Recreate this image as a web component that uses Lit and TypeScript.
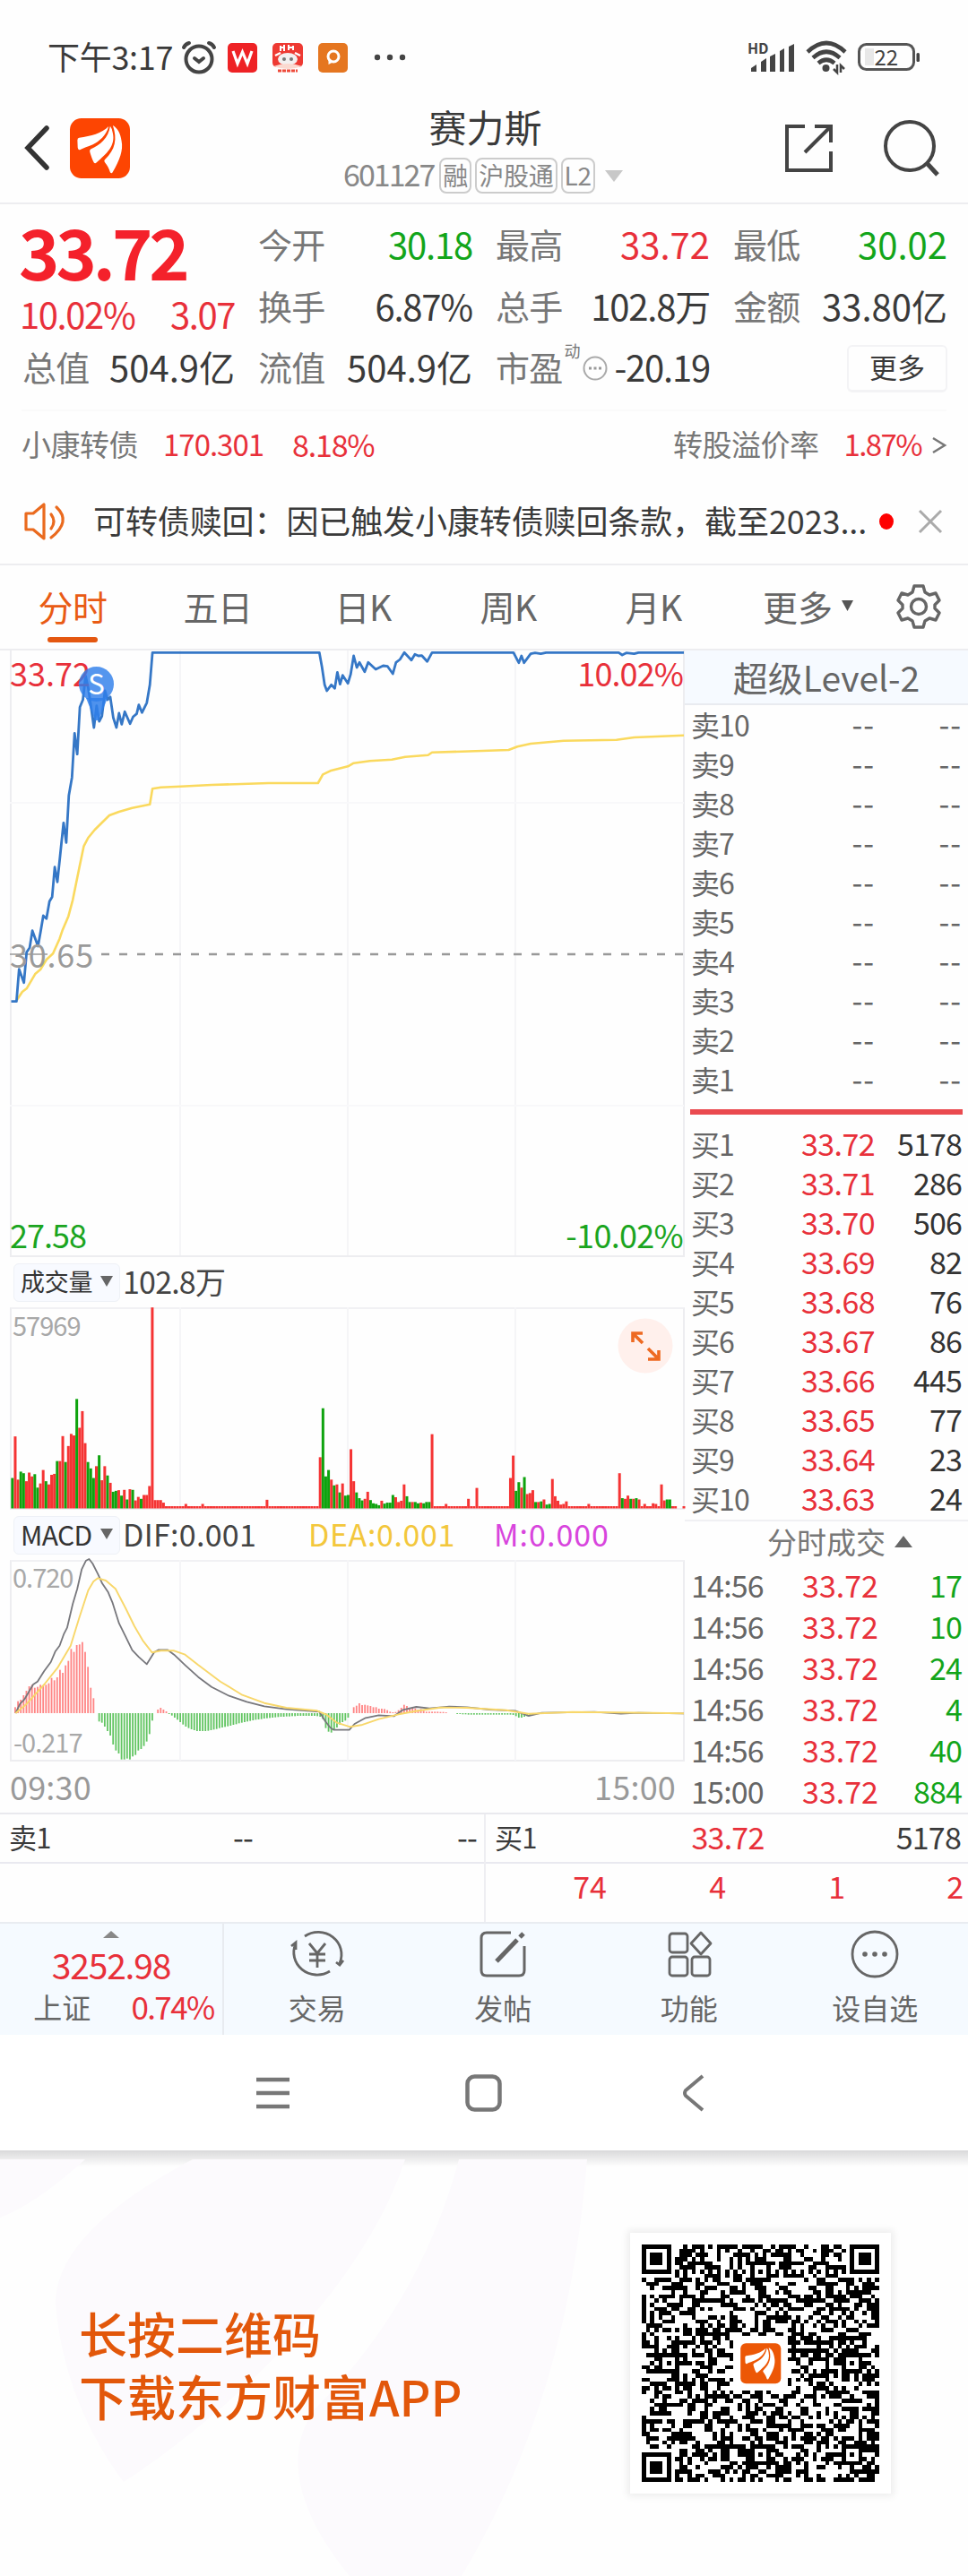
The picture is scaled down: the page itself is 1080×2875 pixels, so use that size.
import { LitElement, html, css, svg } from 'lit';
import { customElement } from 'lit/decorators.js';
import { classMap } from 'lit/directives/class-map.js';

type Point = [number, number];

// 图表坐标域（横轴 22~1553 对应 752px）
const CHART_W = 752;
const X0 = 22;
const X_SCALE = CHART_W / 1531;
const MINUTE = (i: number) => (28 + i * 6.355 - X0) * X_SCALE;

const PRICE_LINE: Point[] = [
  [25, 1490], [37, 1490], [43, 1382], [54, 1427], [60, 1325], [67, 1310], [73, 1253], [86, 1305], [92, 1255],
  [98, 1203], [105, 1213], [112, 1155], [118, 1140], [124, 1040], [130, 1090], [137, 990], [144, 892], [150, 958],
  [156, 800], [163, 740], [169, 592], [175, 662], [181, 505], [188, 480], [194, 400], [200, 440], [206, 500],
  [213, 573], [219, 500], [225, 552], [231, 535], [238, 450], [244, 480], [250, 470], [257, 540], [264, 573],
  [270, 525], [276, 562], [283, 520], [295, 560], [302, 537], [310, 527], [315, 497], [322, 523], [333, 490],
  [340, 430], [346, 322], [725, 322], [731, 370], [737, 430], [742, 450], [752, 430], [760, 442], [766, 388],
  [772, 428], [778, 398], [790, 425], [796, 395], [803, 333], [810, 372], [816, 355], [828, 386], [836, 355],
  [853, 378], [870, 366], [880, 368], [892, 393], [899, 355], [908, 345], [918, 322], [934, 347], [942, 328],
  [950, 333], [958, 332], [970, 352], [981, 322], [1166, 322], [1178, 356], [1184, 333], [1190, 356],
  [1205, 326], [1215, 323], [1228, 326], [1240, 322], [1405, 322], [1413, 330], [1422, 323], [1440, 326],
  [1450, 322], [1553, 322],
];

const AVG_LINE: Point[] = [
  [38, 1485], [50, 1458], [60, 1447], [80, 1397], [92, 1382], [105, 1350], [120, 1330], [135, 1280], [142, 1250],
  [155, 1205], [165, 1150], [180, 1040], [190, 970], [200, 942], [215, 915], [248, 867], [270, 855], [300, 842],
  [340, 830], [346, 778], [365, 773], [410, 770], [480, 765], [610, 759], [722, 759], [733, 730], [750, 718],
  [790, 703], [803, 692], [840, 685], [890, 680], [920, 671], [972, 665], [981, 656], [1080, 652], [1155, 648],
  [1175, 637], [1205, 627], [1280, 617], [1400, 614], [1440, 606], [1553, 599],
];

const DIF_LINE: Point[] = [
  [35, 696], [45, 665], [55, 650], [75, 600], [85, 590], [100, 555], [115, 525], [125, 490], [135, 470],
  [145, 430], [152, 410], [165, 330], [175, 280], [185, 215], [195, 185], [202, 180], [210, 195], [222, 230],
  [232, 262], [245, 290], [255, 325], [270, 395], [285, 440], [300, 485], [315, 508], [333, 532], [350, 492],
  [360, 484], [380, 484], [395, 500], [420, 535], [450, 575], [480, 608], [520, 638], [560, 658], [600, 673],
  [650, 683], [725, 691], [738, 722], [750, 745], [758, 752], [793, 752], [805, 732], [830, 712], [860, 703],
  [895, 706], [915, 685], [945, 675], [975, 680], [1020, 674], [1060, 676], [1110, 684], [1170, 688],
  [1200, 705], [1230, 695], [1350, 692], [1410, 698], [1450, 695], [1553, 697],
];

const DEA_LINE: Point[] = [
  [35, 696], [60, 665], [100, 600], [130, 545], [160, 470], [180, 375], [200, 285], [212, 255], [222, 244],
  [240, 252], [262, 280], [285, 345], [305, 405], [325, 455], [345, 493], [365, 487], [395, 487], [420, 500],
  [450, 535], [500, 590], [550, 635], [600, 662], [650, 678], [720, 688], [740, 700], [765, 728], [795, 742],
  [820, 736], [860, 716], [905, 700], [950, 688], [1000, 677], [1060, 678], [1150, 686], [1200, 698],
  [1300, 692], [1400, 694], [1553, 697],
];

// 成交量：[起始分钟, 颜色+高度]，其余分钟为 r7
const VOLUME: [number, string][] = [
  [0, 'g95 r225 r90 g115 g110 r85 r112 r100 g107 g65 r78 r120 g85 r75 r105 r108 g148 r148 r226 g145 r195 r233 r228 g342 r252 r304 r204 g145 g125 g95 r132 g166 r88 r132 g103 r80 g52 g55 r57 g40 r58 g28 r60 g58 r25 r36 g30 r42 r42 r70 r628 r26 r26 r26 r18'],
  [62, 'r14'],
  [68, 'r14'],
  [91, 'r27'],
  [110, 'r160 g313 g100 g120 r90 g72 r75 g50 r78 g40 g42 r185 r85 g50 g32 g25 r30 r52 g26 g16 g14 g10 r24 g15 g18 g18 g42 r35 r20 r24 r75 g38 g20 r20 g20 g16 r18 g16 g20 g20 r232'],
  [155, 'r14'],
  [163, 'r30'],
  [166, 'r64'],
  [178, 'r95 r165 g55 g82 r65 g98 r45 r48 r57 g20 r20 g22 r28 g12 g14 r92 r38 r24 r12 r14 r22'],
  [206, 'r14'],
  [217, 'r110 g32 r30 r40 g30 r30 g32 r28 r7 r14 r7 r7 r16 r14 r7 r75 r25 g28 g28 r7 r7 r0 r0'],
];

const MACD_BARS = [
  0, 20, 40, 45, 60, 75, 90, 95, 85, 88, 95, 90, 95, 100, 118, 110, 120, 145, 135, 160, 175, 215, 205, 228, 230,
  238, 205, 155, 85, 50, 0, -28, -32, -45, -60, -75, -105, -125, -135, -155, -155, -152, -155, -145, -140, -125,
  -120, -110, -95, -70, -25, 0, 12, 18, 12, 6, -3, -8, -15, -22, -30, -38, -45, -50, -54, -57, -60, -60, -60, -60,
  -59, -57, -55, -53, -50, -48, -46, -44, -42, -39, -37, -34, -32, -30, -28, -26, -24, -22, -21, -20, -18, -17,
  -16, -15, -14, -13, -12, -12, -11, -11, -10, -10, -9, -9, -9, -9, -9, -9, -9, -10, -12, -20, -50, -62, -65, -55,
  -48, -38, -30, -25, -15, 0, 20, 25, 33, 27, 28, 26, 24, 20, 20, 15, 15, 14, 10, 5, 3, 4, 10, 18, 28, 24, 18, 18,
  16, 12, 14, 8, 5, 5, 5, 5, 5, 4, 4, 3, 0, 0, 0, -3, -3, -4, -4, -5, -5, -5, -5, -5, -5, -5, -5, -5, -5, -5, -5,
  -5, -5, -5, -5, -6, -10, -15, -15, -12, -10, -6, -3,
];

const SELLS = [10, 9, 8, 7, 6, 5, 4, 3, 2, 1];
const BUYS: [number, string, string][] = [
  [1, '33.72', '5178'],
  [2, '33.71', '286'],
  [3, '33.70', '506'],
  [4, '33.69', '82'],
  [5, '33.68', '76'],
  [6, '33.67', '86'],
  [7, '33.66', '445'],
  [8, '33.65', '77'],
  [9, '33.64', '23'],
  [10, '33.63', '24'],
];
const TICKS: [string, string, string][] = [
  ['14:56', '33.72', '17'],
  ['14:56', '33.72', '10'],
  ['14:56', '33.72', '24'],
  ['14:56', '33.72', '4'],
  ['14:56', '33.72', '40'],
  ['15:00', '33.72', '884'],
];

const toPoints = (pts: Point[], top: number, unit: number) =>
  pts.map(([x, y]) => `${((x - X0) * X_SCALE).toFixed(1)},${((y - top) / unit).toFixed(1)}`).join(' ');

// 东方财富 logo 的三片羽毛，画布 200x200
const feathers = svg`
  <path d="M31 65 C70 60 106 50 129 27 C121 58 98 77 75 88 C60 95 46 98 33 105 Q27 107 26 98 L25 73 Q25 66 31 65Z"/>
  <path d="M134 26 C128 66 102 88 69 103 Q64 106 67 114 C71 126 74 137 80 148 Q84 153 89 147 C122 118 152 92 143 50 Q141 34 134 26Z"/>
  <path d="M143 24 C158 70 152 104 116 138 Q112 142 117 148 C125 158 130 168 134 180 Q139 186 143 178 C166 140 178 105 172 76 C168 50 160 34 143 24Z"/>
`;

@customElement('stock-chart')
class StockChart extends LitElement {
  static styles = css`
    :host {
      display: block;
      padding-left: 11px;
      color: #444;
    }
    svg {
      display: block;
    }
    .chart {
      position: relative;
      width: 753px;
      border-left: 2px solid #ededf0;
      border-right: 2px solid #ededf0;
      border-bottom: 2px solid #ededf0;
      box-sizing: border-box;
    }
    .chart svg {
      margin-left: -2px;
      overflow: visible;
    }
    .price { height: 677px; }
    .volume { height: 226px; border-top: 2px solid #f1f1f4; }
    .macd { height: 225px; border-top: 2px solid #f1f1f4; }
    .volume svg, .macd svg { margin-top: -2px; }
    .label {
      position: absolute;
      font-size: 36px;
      line-height: 40px;
      letter-spacing: 0;
    }
    .small {
      font-size: 29px;
      line-height: 32px;
      color: #a8a8a8;
      letter-spacing: -1px;
    }
    .red { color: #e8303a; }
    .green { color: #1ba51f; }
    .gray { color: #9a9a9a; }
    .top-left { left: -2px; top: 4px; }
    .top-right { right: 0; top: 4px; letter-spacing: -0.9px; }
    .middle { left: -2px; top: 318px; letter-spacing: 0.8px; }
    .bottom-left { left: -2px; top: 631px; letter-spacing: -1px; }
    .bottom-right { right: 0; top: 631px; letter-spacing: -0.7px; }
    .vol-max { left: 1px; top: 1px; }
    .macd-max { left: 1px; top: 0; }
    .macd-min { left: 2px; bottom: 5px; }
    .marker {
      position: absolute;
      left: 76px;
      top: 18px;
    }
    .expand {
      position: absolute;
      right: 11px;
      top: 12px;
    }
    .bar {
      display: flex;
      align-items: center;
      height: 56px;
      font-size: 34px;
      line-height: 40px;
      letter-spacing: -0.8px;
    }
    .bar span { margin-top: -3px; }
    .pick {
      display: flex;
      align-items: center;
      justify-content: space-between;
      box-sizing: border-box;
      width: 119px;
      height: 43px;
      margin: 0 3px 0 4px;
      padding: 0 7px 3px 7px;
      border: 1px solid #eef1f7;
      border-radius: 6px;
      background: #f8faff;
      font-size: 27px;
      letter-spacing: -0.2px;
      color: #333;
    }
    .pick.latin { font-size: 30px; letter-spacing: -0.6px; }
    .dif { width: 207px; letter-spacing: 0.3px; }
    .dea { width: 207px; color: #f3c73c; letter-spacing: 0.6px; }
    .m { color: #d845dd; letter-spacing: 1px; }
    .times {
      display: flex;
      justify-content: space-between;
      padding: 7px 10px 0 0;
      height: 57px;
      box-sizing: border-box;
      font-size: 36px;
      line-height: 40px;
      letter-spacing: 0.2px;
      color: #999;
    }
  `;

  grid(height: number) {
    return svg`${[190, 377, 564].map(x => svg`<line x1=${x} x2=${x} y1="0" y2=${height} stroke="#f5f5f7" stroke-width="2"/>`)}`;
  }

  volumeBars() {
    const bars: [string, number][] = Array.from({ length: 241 }, () => ['r', 7]);
    for (const [start, list] of VOLUME) {
      list.split(' ').forEach((b, n) => { bars[start + n] = [b[0], Number(b.slice(1))]; });
    }
    return bars.map(([c, v], i) => svg`
      <rect x=${MINUTE(i) - 1.6} y=${224.5 - v / 2.8} width="3" height=${v / 2.8} fill=${c === 'r' ? '#f53434' : '#0ea30e'} />
    `);
  }

  macdBars() {
    return MACD_BARS.map((v, i) => svg`
      <rect x=${MINUTE(i) - 1} y=${v > 0 ? 171 - v / 3 : 171} width="1.8" height=${Math.abs(v) / 3} fill=${v > 0 ? '#ff8585' : '#62c562'} />
    `);
  }

  caret() {
    return html`<svg width="14" height="12" viewBox="0 0 14 12"><path d="M0 0H14L7 12Z" fill="#666"/></svg>`;
  }

  render() {
    return html`
      <div class="chart price">
        <svg width="752" height="675">
          ${this.grid(675)}
          <path d="M0 170H752M0 508H752" stroke="#f8f8fa" stroke-width="2"/>
          <path d="M102 339H752" stroke="#999" stroke-width="2.6" stroke-dasharray="9 11"/>
          <path d="M0 339H42" stroke="#999" stroke-width="1.6"/>
          <polyline points=${toPoints(AVG_LINE, 315, 3)} fill="none" stroke="#fad95e" stroke-width="2.6" stroke-linejoin="round"/>
          <polyline points=${toPoints(PRICE_LINE, 315, 3)} fill="none" stroke="#3577c6" stroke-width="2.8" stroke-linejoin="round"/>
        </svg>
        <span class="label red top-left">33.72</span>
        <span class="label red top-right">10.02%</span>
        <span class="label gray middle">30.65</span>
        <span class="label green bottom-left">27.58</span>
        <span class="label green bottom-right">-10.02%</span>
        <svg class="marker" width="42" height="62" viewBox="0 0 42 62">
          <circle cx="20.500" cy="19.500" r="19.500" fill="#2f7fea" opacity=".82"/>
          <path d="M9 35L19 60H23L33 35Z" fill="#2f7fea" opacity=".85"/>
          <text x="20.500" y="31" font-size="31" text-anchor="middle" fill="#fff">S</text>
        </svg>
      </div>
      <div class="bar">
        <div class="pick">成交量${this.caret()}</div>
        <span>102.8万</span>
      </div>
      <div class="chart volume">
        <svg width="752" height="225">${this.grid(225)}${this.volumeBars()}</svg>
        <span class="label small vol-max">57969</span>
        <svg class="expand" width="62" height="62" viewBox="0 0 62 62">
          <circle cx="31" cy="31" r="30.500" fill="#fff0ec"/>
          <path d="M17 27V17H28M17 17L28 28M46 36V46H34M46 46L34 34" fill="none" stroke="#ee6a22" stroke-width="3.600"/>
        </svg>
      </div>
      <div class="bar">
        <div class="pick latin">MACD${this.caret()}</div>
        <span class="dif">DIF:0.001</span>
        <span class="dea">DEA:0.001</span>
        <span class="m">M:0.000</span>
      </div>
      <div class="chart macd">
        <svg width="752" height="224">
          ${this.grid(224)}
          ${this.macdBars()}
          <polyline points=${toPoints(DIF_LINE, 183, 3)} fill="none" stroke="#77777c" stroke-width="1.8" stroke-linejoin="round"/>
          <polyline points=${toPoints(DEA_LINE, 183, 3)} fill="none" stroke="#f8d76a" stroke-width="1.9" stroke-linejoin="round"/>
        </svg>
        <span class="label small macd-max">0.720</span>
        <span class="label small macd-min">-0.217</span>
      </div>
      <div class="times"><span>09:30</span><span>15:00</span></div>
    `;
  }
}

@customElement('order-book')
class OrderBook extends LitElement {
  static styles = css`
    :host {
      display: block;
      font-size: 34px;
      color: #666;
      letter-spacing: -0.9px;
    }
    .title {
      box-sizing: border-box;
      height: 61px;
      padding-top: 4px;
      background: #f6faff;
      border-bottom: 2px solid #e9ebf0;
      text-align: center;
      font-size: 39px;
      line-height: 50px;
      letter-spacing: 0;
    }
    .row {
      display: grid;
      grid-template-columns: 90px 1fr 97px;
      height: 44px;
      line-height: 40px;
      padding: 0 7px 0 7px;
      white-space: nowrap;
    }
    .row span:not(:first-child) { text-align: right; }
    .row span:first-child { font-size: 32px; }
    .row .price { letter-spacing: -0.6px; }
    .sells .row span:not(:first-child) { letter-spacing: 1px; }
    .line {
      height: 6px;
      margin: 10px 6px 12px;
      background: #ea4a4f;
    }
    .sells { padding-top: 1px; }
    .price { color: #e8303a; }
    .dark { color: #333; }
    .green { color: #13a51a; }
    .deal {
      display: flex;
      align-items: center;
      justify-content: center;
      gap: 10px;
      box-sizing: border-box;
      height: 52px;
      padding: 0 0 6px 30px;
      border-top: 2px solid #f0f0f3;
      font-size: 33px;
      line-height: 42px;
      letter-spacing: 0;
      color: #777;
    }
    .tick { height: 46px; grid-template-columns: 90px 119px 1fr; line-height: 42px; }
    .tick span:first-child { font-size: 34px; letter-spacing: -0.8px; }
    .tick .price { letter-spacing: 0; }
  `;

  render() {
    return html`
      <div class="title">超级Level-2</div>
      <div class="sells">
        ${SELLS.map(n => html`<div class="row"><span>卖${n}</span><span>--</span><span>--</span></div>`)}
      </div>
      <div class="line"></div>
      ${BUYS.map(([n, price, vol]) => html`
        <div class="row"><span>买${n}</span><span class="price">${price}</span><span class="dark">${vol}</span></div>
      `)}
      <div class="deal">分时成交<svg width="20" height="13"><path d="M0 13H20L10 0Z" fill="#666"/></svg></div>
      ${TICKS.map(([time, price, vol]) => html`
        <div class="row tick"><span>${time}</span><span class="price">${price}</span><span class="green">${vol}</span></div>
      `)}
    `;
  }
}

@customElement('qr-code')
class QrCode extends LitElement {
  static styles = css`
    :host {
      display: block;
      box-sizing: border-box;
      width: 291px;
      height: 291px;
      padding: 13px;
      background: #fff;
      box-shadow: 0 0 8px 3px rgba(0, 0, 0, 0.07);
    }
    svg { display: block; }
  `;

  modules() {
    const size = 57;
    const rects = [];
    let seed = 20230215;
    const inBox = (x: number, y: number, bx: number, by: number, w: number) => x >= bx && x < bx + w && y >= by && y < by + w;
    // 同心方框：定位图案和校正图案共用
    const ring = (x: number, y: number, cx: number, cy: number) => Math.max(Math.abs(x - cx), Math.abs(y - cy));
    const aligns = [[28, 6], [6, 28], [50, 28], [28, 50], [50, 50]];
    for (let y = 0; y < size; y++) {
      for (let x = 0; x < size; x++) {
        seed = (seed * 1103515245 + 12345) % 2147483648;
        let on = (seed >> 12) % 100 < 51;
        if (x === 6 || y === 6) on = (x + y) % 2 === 0;
        for (const [ax, ay] of aligns) {
          const r = ring(x, y, ax, ay);
          if (r <= 2) on = r !== 1;
        }
        for (const [fx, fy] of [[3, 3], [53, 3], [3, 53]]) {
          const r = ring(x, y, fx, fy);
          if (r <= 4) on = r !== 4 && r !== 2;
        }
        if (inBox(x, y, 22, 22, 13)) on = false;
        if (on) rects.push(`M${x} ${y}h1v1h-1z`);
      }
    }
    return rects.join('');
  }

  render() {
    return html`
      <svg width="265" height="265" viewBox="0 0 57 57">
        <path d=${this.modules()} fill="#000" shape-rendering="crispEdges"/>
        <rect x="23.700" y="23.700" width="9.700" height="9.700" rx="1.300" fill="#ec5706"/>
        <g transform="translate(23.600 23.600) scale(.048)" fill="#fff">${feathers}</g>
      </svg>
    `;
  }
}

@customElement('app-root')
class AppRoot extends LitElement {
  static styles = css`
    :host {
      display: block;
      width: 1080px;
      height: 2875px;
      overflow: hidden;
      background: #fefefe;
      color: #3a3a3a;
      font-family: 'Noto Sans CJK SC', 'Noto Sans', sans-serif;
    }
    svg { display: block; flex: none; overflow: visible; }
    .red { color: #e8303a; }
    .green { color: #13a51a; }

    .status {
      display: flex;
      align-items: center;
      height: 104px;
      padding: 24px 53px 0 53px;
      box-sizing: border-box;
    }
    .clock {
      width: 150px;
      font-size: 36px;
      line-height: 44px;
      letter-spacing: -0.3px;
      margin-top: -5px;
      white-space: nowrap;
    }
    .apps { display: flex; gap: 17px; margin-left: 13px; }
    .dots { margin-left: 28px; }
    .signals { display: flex; align-items: center; margin-left: auto; gap: 12px; }

    .header {
      display: grid;
      grid-template-columns: 300px 1fr 300px;
      height: 124px;
      box-sizing: border-box;
      border-bottom: 2px solid #ededf0;
    }
    .left { display: flex; align-items: center; gap: 22px; padding-left: 27px; }
    .right { display: flex; align-items: center; justify-content: flex-end; gap: 54px; padding-right: 31px; }
    .name {
      text-align: center;
      font-size: 42px;
      line-height: 50px;
      padding: 12px 0 0 3px;
    }
    .code {
      display: flex;
      align-items: center;
      justify-content: center;
      gap: 4px;
      height: 42px;
      font-size: 34px;
      letter-spacing: -2px;
      color: #888;
      margin-top: 9px;
      padding-right: 2px;
    }
    .code span { line-height: 40px; padding-bottom: 4px; }
    .code .tag {
      height: 36px;
      line-height: 34px;
      padding: 0 2px;
      border: 2px solid #ccc;
      border-radius: 8px;
      font-size: 28px;
      letter-spacing: -0.2px;
    }
    .code .tag:nth-child(2) { margin-left: 2px; }
    .code svg { margin-left: 7px; }

    .quote {
      display: grid;
      grid-template-columns: 237px 239px 239px 239px;
      grid-template-rows: 69px 68px 69px;
      column-gap: 26px;
      box-sizing: border-box;
      height: 229px;
      padding: 12px 24px 11px 25px;
    }
    .cell {
      display: flex;
      justify-content: space-between;
      align-items: center;
      font-size: 38px;
      line-height: 64px;
      padding-bottom: 5px;
      letter-spacing: -0.8px;
      white-space: nowrap;
    }
    .cell .key { color: #777; }
    .cell .value { font-size: 40px; letter-spacing: 0; }
    .cell .value.tight { letter-spacing: -1.2px; }
    .main {
      grid-row: 1 / 3;
      display: flex;
      flex-direction: column;
      white-space: nowrap;
    }
    .big {
      font-size: 77px;
      font-weight: 700;
      line-height: 90px;
      letter-spacing: -4px;
      color: #f4212b;
      margin-left: -4px;
      margin-top: -5px;
    }
    .change {
      display: flex;
      justify-content: space-between;
      font-size: 40px;
      line-height: 50px;
      letter-spacing: -1.4px;
      margin-left: -3px;
    }
    .pe { display: flex; align-items: center; }
    .pe sup { font-size: 18px; line-height: 20px; align-self: flex-start; margin-left: 2px; padding-top: 4px; }
    .pe svg { margin: 4px 0 0 3px; }
    .more {
      justify-self: end;
      box-sizing: border-box;
      width: 112px;
      height: 53px;
      margin-top: 8px;
      border: 2px solid #f3f3f5;
      border-bottom-width: 3px;
      border-radius: 6px;
      text-align: center;
      font-size: 31px;
      line-height: 44px;
    }

    .bond {
      display: flex;
      align-items: center;
      height: 78px;
      box-sizing: border-box;
      margin: 0 24px;
      padding-bottom: 4px;
      border-top: 2px solid #fafafa;
      font-size: 33px;
      letter-spacing: -0.5px;
      color: #777;
    }
    .bond .a { margin-left: 28px; letter-spacing: -1.6px; }
    .bond .code-price { margin-left: 28px; letter-spacing: -1px; }
    .bond .b { margin-left: 32px; font-size: 34px; letter-spacing: -1.2px; }
    .bond .c { margin-left: auto; }
    .bond svg { margin: 4px 0 0 12px; }

    .notice {
      display: flex;
      align-items: center;
      height: 96px;
      box-sizing: border-box;
      padding: 0 29px 1px 27px;
      border-bottom: 2px solid #ededf0;
      font-size: 36px;
      letter-spacing: -0.1px;
      white-space: nowrap;
    }
    .notice .text { width: 864px; margin-left: 30px; padding-bottom: 3px; }
    .reddot { width: 18px; height: 18px; border-radius: 50%; background: #fe0000; margin: 0 28px 0 14px; }

    .tabs {
      display: flex;
      height: 95px;
      box-sizing: border-box;
      border-bottom: 2px solid #ededf0;
      font-size: 39px;
      color: #666;
    }
    .tab {
      display: flex;
      flex-direction: column;
      align-items: center;
      width: 162px;
      line-height: 50px;
      padding-top: 20px;
      letter-spacing: -0.5px;
    }
    .tab.active { color: #e95b14; }
    .tab.active::after {
      content: '';
      width: 56px;
      height: 6px;
      margin-top: 10px;
      border-radius: 3px;
      background: #e45710;
    }
    .tab-more { display: flex; align-items: center; gap: 10px; margin-left: 41px; padding-bottom: 3px; }
    .gear { margin: 21px 0 0 49px; }

    .body { display: flex; height: 1297px; }
    .body stock-chart { width: 753px; }
    .body order-book { width: 316px; }

    .queue {
      display: grid;
      grid-template-columns: 540px 540px;
      border-top: 2px solid #e9e9ee;
      height: 122px;
      box-sizing: border-box;
      font-size: 34px;
    }
    .half { display: grid; grid-template-rows: 55px 65px; }
    .half + .half { border-left: 2px solid #eeeef2; }
    .best {
      display: grid;
      grid-template-columns: 1fr 1fr 1fr;
      padding: 0 8px 0 10px;
      line-height: 50px;
      border-bottom: 2px solid #e9e9f0;
      letter-spacing: -0.8px;
    }
    .best span:first-child { font-size: 31px; }
    .best span:nth-child(2) { text-align: center; }
    .best span:nth-child(3) { text-align: right; }
    .lots {
      display: grid;
      grid-template-columns: 135px 133px 133px 132px;
      text-align: right;
      line-height: 50px;
    }

    .tabbar {
      display: flex;
      height: 126px;
      background: #f5faff;
      border-top: 2px solid #e9ecf1;
      box-sizing: border-box;
      color: #666;
      font-size: 32px;
    }
    .index {
      width: 250px;
      border-right: 2px solid #e8ebf0;
      display: flex;
      flex-direction: column;
      align-items: center;
      box-sizing: border-box;
      padding-top: 8px;
    }
    .point { font-size: 39px; line-height: 46px; letter-spacing: -1.2px; margin-top: 6px; }
    .pair { display: flex; gap: 45px; line-height: 46px; padding-left: 28px; margin-top: 1px; white-space: nowrap; }
    .pair .red { font-size: 35px; letter-spacing: -1.6px; }
    .item {
      width: 207.5px;
      display: flex;
      flex-direction: column;
      align-items: center;
      padding-top: 7px;
      line-height: 46px;
    }
    .item svg { margin-bottom: 9px; }
    .nav {
      display: flex;
      align-items: center;
      height: 129px;
      padding-left: 286px;
      background: #fff;
    }
    .nav svg + svg { margin-left: 196px; }
    .nav svg:last-child { margin-left: 201px; }

    .footer {
      position: relative;
      display: flex;
      align-items: flex-start;
      justify-content: space-between;
      height: 475px;
      padding: 92px 86px 0 88px;
      box-sizing: border-box;
    }
    .footer::before {
      content: '';
      position: absolute;
      left: 0;
      right: 0;
      top: 0;
      height: 18px;
      background: linear-gradient(#d9d9da, rgba(240, 240, 242, 0));
    }
    .mark { position: absolute; left: 0; top: 0; }
    .slogan {
      position: relative;
      margin-top: 77px;
      font-size: 54px;
      font-weight: 500;
      line-height: 70px;
      color: #e2570a;
    }
    qr-code { position: relative; }
  `;

  renderStatus() {
    return html`
      <div class="status">
        <div class="clock">下午3:17</div>
        <svg width="38" height="38" viewBox="0 0 38 38" fill="none" stroke="#444" stroke-width="4" stroke-linecap="round">
          <circle cx="19" cy="21" r="14.500"/><path d="M14 20L19 24L24 20M2 8Q4 4 8 3M30 3Q34 4 36 8"/>
        </svg>
        <div class="apps">
          <svg width="33" height="33" viewBox="0 0 33 33">
            <rect width="33" height="33" rx="5" fill="#ee2225"/>
            <path d="M6 9L11 23L16.500 10L22 23L27 9" fill="none" stroke="#fff" stroke-width="3.200"/>
          </svg>
          <svg width="34" height="33" viewBox="0 0 34 33">
            <rect width="34" height="27" rx="5" fill="#ee3a33"/>
            <path d="M9 3V9M13 2V9M18 2V8M23 3V8M8 5H14M17 5H24" stroke="#fff" stroke-width="2"/>
            <ellipse cx="17" cy="18" rx="11" ry="7" fill="#f3f0f0"/>
            <circle cx="13" cy="18" r="2" fill="#777"/><circle cx="21" cy="18" r="2" fill="#777"/>
            <path d="M3 14L9 11M31 14L25 11" stroke="#fff" stroke-width="2.500"/>
            <path d="M1 26Q17 20 33 26Q17 32 1 26Z" fill="#fbd9d0"/>
            <path d="M6 31H28" stroke="#ee4a3a" stroke-width="3" stroke-dasharray="4 1"/>
          </svg>
          <svg width="33" height="33" viewBox="0 0 33 33">
            <rect width="33" height="33" rx="5" fill="#e57620"/>
            <circle cx="17" cy="15" r="6" fill="none" stroke="#fff" stroke-width="3"/><path d="M11.500 16V24L17 21" fill="#fff"/>
          </svg>
        </div>
        <svg class="dots" width="40" height="8" viewBox="0 0 40 8" fill="#444">
          <circle cx="5" cy="4" r="3.200"/><circle cx="19" cy="4" r="3.200"/><circle cx="33" cy="4" r="3.200"/>
        </svg>
        <div class="signals">
          <svg width="51" height="34" viewBox="0 0 51 34" fill="#444">
            <text x="-2" y="12.500" font-size="16" font-weight="700">HD</text>
            <path d="M2 33V29L8 25V33ZM13 33V22L19 18V33ZM23 33V16L29 13V33ZM34 33V10L39 7V33ZM44 33V5L50 2V33Z"/>
          </svg>
          <svg width="46" height="36" viewBox="0 0 46 36" fill="none" stroke="#444" stroke-width="4.600">
            <path d="M2 12Q23 -8 44 12M8 18.500Q23 5 38 18.500M14 24.500Q23 17 32 24.500"/>
            <circle cx="22.500" cy="30" r="4" fill="#444" stroke="none"/>
            <path d="M31 31L35 35V26M39 35V27L43 31" stroke-width="2.500"/>
          </svg>
          <svg width="70" height="32" viewBox="0 0 70 32">
            <rect x="1.500" y="1.500" width="61" height="28" rx="8" fill="none" stroke="#555" stroke-width="3"/>
            <rect x="8" y="6" width="10" height="19" fill="#e8e8e8"/>
            <rect x="65.500" y="11" width="3.500" height="10" rx="1.500" fill="#444"/>
            <text x="18.500" y="24.500" font-size="24" fill="#444">22</text>
          </svg>
        </div>
      </div>
    `;
  }

  renderHeader() {
    return html`
      <div class="header">
        <div class="left">
          <svg width="29" height="50" viewBox="0 0 29 50"><path d="M25 3L4 25L25 47" fill="none" stroke="#333" stroke-width="5.500" stroke-linecap="round"/></svg>
          <svg width="67" height="67" viewBox="0 0 200 200"><rect width="200" height="200" rx="38" fill="#fd4502"/><g fill="#fff">${feathers}</g></svg>
        </div>
        <div>
          <div class="name">赛力斯</div>
          <div class="code">
            <span>601127</span><span class="tag">融</span><span class="tag">沪股通</span><span class="tag">L2</span>
            <svg width="20" height="13"><path d="M0 0H20L10 13Z" fill="#c8c8c8"/></svg>
          </div>
        </div>
        <div class="right">
          <svg width="56" height="56" viewBox="0 0 56 56" fill="none" stroke="#444" stroke-width="4">
            <path d="M23 4H3V53H52V32M34 4H52V22M52 4L23 33"/>
          </svg>
          <svg width="64" height="64" viewBox="0 0 64 64" fill="none" stroke="#444" stroke-width="4">
            <circle cx="30" cy="30" r="27"/><path d="M49 49L61 62" stroke-width="5"/>
          </svg>
        </div>
      </div>
    `;
  }

  // 含数字 1 的值字距收紧
  cell(key: string, value: string, color = 'plain') {
    const classes = { value: true, tight: /[1%]/.test(value), [color]: true };
    return html`<div class="cell"><span class="key">${key}</span><span class=${classMap(classes)}>${value}</span></div>`;
  }

  renderQuote() {
    return html`
      <div class="quote">
        <div class="main">
          <div class="big">33.72</div>
          <div class="change red"><span>10.02%</span><span>3.07</span></div>
        </div>
        ${this.cell('今开', '30.18', 'green')}
        ${this.cell('最高', '33.72', 'red')}
        ${this.cell('最低', '30.02', 'green')}
        ${this.cell('换手', '6.87%')}
        ${this.cell('总手', '102.8万')}
        ${this.cell('金额', '33.80亿')}
        ${this.cell('总值', '504.9亿')}
        ${this.cell('流值', '504.9亿')}
        <div class="cell">
          <span class="key pe">市盈<sup>动</sup>
            <svg width="28" height="28" viewBox="0 0 28 28"><circle cx="14" cy="14" r="12.500" fill="none" stroke="#aaa" stroke-width="2"/><path d="M7 14H21" stroke="#999" stroke-width="3" stroke-dasharray="3 2.500"/></svg>
          </span>
          <span class="value tight">-20.19</span>
        </div>
        <div class="more">更多</div>
      </div>
      <div class="bond">
        <span>小康转债</span><span class="code-price red">170.301</span><span class="b red">8.18%</span>
        <span class="c">转股溢价率</span><span class="a red">1.87%</span>
        <svg width="16" height="18" viewBox="0 0 16 18"><path d="M1 1L14 9L1 17" fill="none" stroke="#777" stroke-width="2.500"/></svg>
      </div>
      <div class="notice">
        <svg width="47" height="42" viewBox="0 0 47 42" fill="none" stroke="#ea6a1e" stroke-width="3.200" stroke-linejoin="round" stroke-linecap="round">
          <path d="M2 12H10L22 2V40L10 30H2ZM30 13Q36 21 30 29M36 5Q53 21 30 39"/>
        </svg>
        <span class="text">可转债赎回：因已触发小康转债赎回条款，截至2023...</span>
        <i class="reddot"></i>
        <svg width="26" height="26" viewBox="0 0 26 26"><path d="M1 1L25 25M25 1L1 25" stroke="#aaa" stroke-width="3"/></svg>
      </div>
    `;
  }

  renderTabs() {
    const tabs = ['分时', '五日', '日K', '周K', '月K'];
    return html`
      <div class="tabs">
        ${tabs.map((t, i) => html`<div class=${classMap({ tab: true, active: i === 0 })}>${t}</div>`)}
        <div class="tab-more">更多<svg width="13" height="12"><path d="M0 0H13L6.500 12Z" fill="#555"/></svg></div>
        <svg class="gear" width="48" height="50" viewBox="0 0 48 50" fill="none" stroke="#666" stroke-width="3.400" stroke-linejoin="round">
          <path d="M19 2H29L31 9L36 12L43 10L47 18L42 23V27L47 32L43 40L36 38L31 41L29 48H19L17 41L12 38L5 40L1 32L6 27V23L1 18L5 10L12 12L17 9Z"/>
          <circle cx="24" cy="25" r="8.500"/>
        </svg>
      </div>
    `;
  }

  renderBottom() {
    return html`
      <div class="queue">
        <div class="half">
          <div class="best"><span>卖1</span><span>--</span><span>--</span></div>
        </div>
        <div class="half">
          <div class="best"><span>买1</span><span class="red">33.72</span><span>5178</span></div>
          <div class="lots red"><span>74</span><span>4</span><span>1</span><span>2</span></div>
        </div>
      </div>
      <div class="tabbar">
        <div class="index">
          <svg width="18" height="8"><path d="M0 8H18L9 0Z" fill="#888"/></svg>
          <div class="point red">3252.98</div>
          <div class="pair"><span>上证</span><span class="red">0.74%</span></div>
        </div>
        <div class="item">
          <svg width="60" height="54" viewBox="0 0 60 54" fill="none" stroke="#666" stroke-width="2.800">
            <path d="M16 7A26 25 0 0 1 55 37M51 36L55 39L59 34M44 46A26 25 0 0 1 6 15M1 18L6 14V22"/>
            <path d="M21 15L30 26L39 15M21 27H39M21 34H39M30 26V42"/>
          </svg>
          交易
        </div>
        <div class="item">
          <svg width="54" height="54" viewBox="0 0 54 54" fill="none" stroke="#666" stroke-width="3">
            <path d="M36 3H9Q3 3 3 9V45Q3 51 9 51H45Q51 51 51 45V18"/>
            <path d="M20 35L43 11" stroke-width="5"/><path d="M46 8L50 4" stroke-width="5"/>
          </svg>
          发帖
        </div>
        <div class="item">
          <svg width="50" height="54" viewBox="0 0 50 54" fill="none" stroke="#666" stroke-width="2.800">
            <rect x="3" y="4" width="20" height="21" rx="3"/><rect x="3" y="30" width="20" height="21" rx="3"/>
            <rect x="28" y="30" width="20" height="21" rx="3"/><path d="M38 3L49 15L38 27L27 15Z" stroke-linejoin="round"/>
          </svg>
          功能
        </div>
        <div class="item">
          <svg width="54" height="54" viewBox="0 0 54 54"><circle cx="27" cy="27" r="25" fill="none" stroke="#666" stroke-width="2.800"/>
            <circle cx="16" cy="27" r="2.800" fill="#666"/><circle cx="27" cy="27" r="2.800" fill="#666"/><circle cx="38" cy="27" r="2.800" fill="#666"/></svg>
          设自选
        </div>
      </div>
      <div class="nav">
        <svg width="37" height="38" viewBox="0 0 37 38"><path d="M0 4H37M0 19H37M0 34H37" stroke="#777" stroke-width="4.500"/></svg>
        <svg width="41" height="42" viewBox="0 0 41 42"><rect x="2.500" y="2.500" width="36" height="37" rx="8" fill="none" stroke="#777" stroke-width="4.500"/></svg>
        <svg width="25" height="42" viewBox="0 0 25 42"><path d="M23 2L4 18Q2 21 4 24L23 40" fill="none" stroke="#777" stroke-width="4"/></svg>
      </div>
    `;
  }

  render() {
    return html`
      ${this.renderStatus()}
      ${this.renderHeader()}
      ${this.renderQuote()}
      ${this.renderTabs()}
      <div class="body">
        <stock-chart></stock-chart>
        <order-book></order-book>
      </div>
      ${this.renderBottom()}
      <div class="footer">
        <svg class="mark" width="700" height="475" fill="#fcfafd">
          <path d="M0 10H95Q40 60 0 75ZM215 10C120 60 62 115 62 170C68 250 100 320 138 370C230 310 400 170 452 10Z"/>
          <path d="M512 10C480 130 420 220 350 290C310 350 345 420 390 475H515C590 350 640 200 655 10Z"/>
        </svg>
        <div class="slogan">长按二维码<br>下载东方财富APP</div>
        <qr-code></qr-code>
      </div>
    `;
  }
}
